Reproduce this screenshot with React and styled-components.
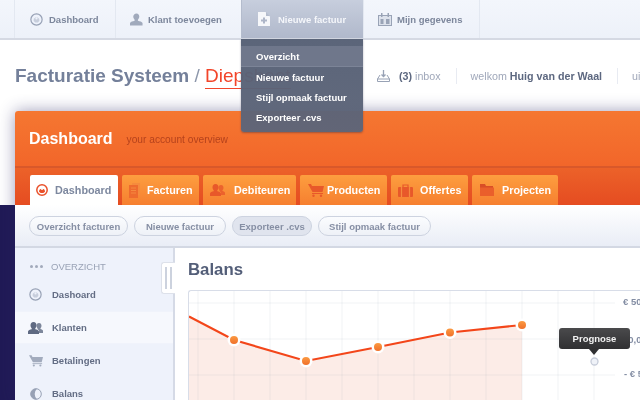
import React from 'react';
import styled, { createGlobalStyle } from 'styled-components';

const Global = createGlobalStyle`
  html, body { margin: 0; padding: 0; }
  body {
    width: 640px;
    height: 400px;
    overflow: hidden;
    font-family: "Liberation Sans", Arial, sans-serif;
    background: #fff;
  }
`;

const Shell = styled.div`
  position: relative;
  width: 640px;
  height: 400px;
  overflow: hidden;
  background: linear-gradient(#fff 205px, #201a56 205px);
  filter: blur(.3px);
`;

/* top navigation */
const TopNav = styled.nav`
  display: flex;
  height: 38px;
  padding-left: 14px;
  background: linear-gradient(#f3f6fc, #edf1f9);
  border-bottom: 2px solid #d5d9e3;
`;

const NavItem = styled.a`
  display: flex;
  align-items: center;
  gap: ${p => p.$gap || 6}px;
  width: ${p => p.$width}px;
  box-sizing: border-box;
  padding-left: ${p => p.$pad || 16}px;
  font-size: 9.5px;
  font-weight: bold;
  color: ${p => (p.$active ? '#f4f6fa' : '#7d879c')};
  border-left: 1px solid ${p => (p.$active ? '#b4bccd' : '#e3e8f1')};
  background: ${p => (p.$active ? 'linear-gradient(#c7cedd, #b0b8cb)' : 'none')};
  &:last-child { border-right: 1px solid #e3e8f1; }
`;

const Dropdown = styled.ul`
  position: absolute;
  top: 39px;
  left: 241px;
  width: 122px;
  height: 93px;
  box-sizing: border-box;
  margin: 0;
  padding: 7px 0 0;
  list-style: none;
  border-radius: 0 0 3px 3px;
  background: linear-gradient(rgba(86, 96, 117, .97), rgba(93, 101, 121, .97));
  box-shadow: 0 1px 2px rgba(40, 40, 70, .4);
  z-index: 5;
`;

const DropItem = styled.li`
  display: flex;
  align-items: center;
  height: ${p => (p.$current ? 19 : 20)}px;
  padding-top: ${p => (p.$current ? 1 : 0)}px;
  padding-left: 15px;
  font-size: 9.5px;
  font-weight: bold;
  color: #fff;
  background: ${p => (p.$current ? '#6f778b' : 'none')};
  border-bottom: ${p => (p.$current ? '1px solid #7c8497' : 'none')};
`;

/* page title and account strip */
const PageHead = styled.header`
  display: flex;
  align-items: center;
  height: 71px;
  padding-left: 15px;
`;

const Title = styled.h1`
  width: 362px;
  flex: none;
  margin: 0;
  font-size: 19px;
  font-weight: bold;
  color: #74809a;
  white-space: nowrap;
`;

const Slash = styled.span`
  font-weight: normal;
  color: #8d97ab;
`;

const Crumb = styled.span`
  font-weight: normal;
  color: #f2452a;
  padding-bottom: 2px;
  border-bottom: 1px solid #f2452a;
`;

const Account = styled.div`
  display: flex;
  align-items: center;
  flex: none;
  font-size: 10.7px;
  color: #a0a8ba;
  white-space: nowrap;
`;

const AccountCell = styled.div`
  display: flex;
  align-items: center;
  gap: 3px;
  height: 16px;
  padding-right: 15px;
  margin-right: 14px;
  border-right: 1px solid #e8ebf2;
`;

const InboxLabel = styled.span`
  margin-left: 6px;
`;

const Strong = styled.b`
  color: #5d6880;
`;

/* orange panel */
const Panel = styled.section`
  width: 700px;
  margin-left: 15px;
  border-radius: 3px 0 0 0;
  box-shadow: 0 0 16px rgba(40, 35, 100, .45);
  background: #fff;
`;

const PanelHead = styled.div`
  display: flex;
  align-items: center;
  gap: 14px;
  height: 55px;
  padding: 0 0 0 14px;
  border-radius: 3px 0 0 0;
  border-bottom: 2px solid #d9582a;
  background: linear-gradient(#f57731, #f2662a);
`;

const PanelTitle = styled.h2`
  margin: 0;
  font-size: 16px;
  font-weight: bold;
  color: #fff;
`;

const PanelSub = styled.span`
  margin-top: 2px;
  font-size: 10.2px;
  color: #b5421c;
`;

const TabBar = styled.div`
  display: flex;
  align-items: flex-end;
  gap: 4px;
  height: 37px;
  padding-left: 15px;
  background: linear-gradient(#ec6229, #e54c21);
`;

const Tab = styled.a`
  display: flex;
  align-items: center;
  gap: ${p => p.$gap || 7}px;
  width: ${p => p.$width}px;
  height: 30px;
  box-sizing: border-box;
  padding-left: ${p => p.$pad || 7}px;
  border-radius: 2px 2px 0 0;
  font-size: 10.8px;
  font-weight: bold;
  color: ${p => (p.$active ? '#7d889f' : '#fff')};
  background: ${p => (p.$active ? '#fff' : 'linear-gradient(#fd9e3f, #f67f30)')};
`;

const ToolBar = styled.div`
  display: flex;
  align-items: flex-start;
  gap: 6px;
  height: 41px;
  padding: 0 0 0 14px;
  border-bottom: 2px solid #d3d8e3;
  background: linear-gradient(#fff, #e9edf6);
`;

const Pill = styled.a`
  display: flex;
  align-items: center;
  justify-content: center;
  width: ${p => p.$width}px;
  height: 20px;
  margin-top: 11px;
  box-sizing: border-box;
  border-radius: 10px;
  border: 1px solid #cdd3e0;
  font-size: 9.5px;
  font-weight: bold;
  color: #868fa4;
  background: ${p => (p.$active ? '#e0e4ee' : 'linear-gradient(#fbfcfe, #eef1f7)')};
`;

const Body = styled.div`
  display: flex;
  height: 152px;
`;

const Sidebar = styled.aside`
  position: relative;
  flex: none;
  width: 160px;
  padding-top: 9px;
  box-sizing: border-box;
  background: #eef2fb;
  border-right: 2px solid #d5dae6;
`;

const SideHeading = styled.div`
  display: flex;
  align-items: center;
  gap: 8px;
  height: 18px;
  margin-bottom: 3px;
  padding-left: 15px;
  font-size: 9.5px;
  color: #9aa3b6;
`;

const Dots = styled.span`
  display: flex;
  gap: 2px;
  i {
    width: 3px;
    height: 3px;
    border-radius: 50%;
    background: #a2aabb;
  }
`;

const SideItem = styled.a`
  display: flex;
  align-items: center;
  height: 33px;
  box-sizing: border-box;
  font-size: 9.5px;
  font-weight: bold;
  color: #636d84;
  background: ${p => (p.$current ? '#f6f8fd' : 'none')};
  border-top: 1px solid ${p => (p.$current ? '#f0f3fb' : 'transparent')};
  border-bottom: 1px solid ${p => (p.$current ? '#f0f3fb' : 'transparent')};
`;

const SideIcon = styled.span`
  display: flex;
  justify-content: center;
  flex: none;
  width: 37px;
  padding-left: 4px;
  box-sizing: border-box;
`;

const Handle = styled.div`
  position: absolute;
  top: 14px;
  right: -2px;
  width: 14px;
  height: 32px;
  display: flex;
  justify-content: center;
  gap: 3px;
  padding: 4px 0;
  box-sizing: border-box;
  border-radius: 3px 0 0 3px;
  background: #fff;
  border: 1px solid #dde1ea;
  border-right: none;
  i {
    width: 2px;
    background: #ccd2de;
  }
`;

const Content = styled.main`
  flex: 1;
  padding: 0 0 0 13px;
  background: #fff;
`;

const ContentTitle = styled.h3`
  margin: 0;
  height: 42px;
  line-height: 44px;
  font-size: 16.8px;
  font-weight: bold;
  color: #535e78;
`;

const ChartFrame = styled.div`
  position: relative;
  height: 110px;
  box-sizing: border-box;
  border-top: 1px solid #d8dde8;
  border-left: 1px solid #d8dde8;
  border-radius: 3px 0 0 0;
  svg { display: block; }
`;

const Tooltip = styled.div`
  position: absolute;
  left: 370px;
  top: 37px;
  width: 71px;
  height: 21px;
  display: flex;
  align-items: center;
  justify-content: center;
  border-radius: 3px;
  font-size: 9.5px;
  font-weight: bold;
  color: #f2f2f2;
  background: linear-gradient(#4a4a4c, #303032);
  &::after {
    content: '';
    position: absolute;
    left: 30px;
    bottom: -6px;
    border-left: 5px solid transparent;
    border-right: 5px solid transparent;
    border-top: 6px solid #303032;
  }
`;

/* icons */
const Gauge = ({ c = '#97a1b5', bg = '#eef2fb', size = 13 }) => (
  <svg width={size} height={size} viewBox="0 0 12 12">
    <circle cx="6" cy="6" r="5.2" fill={bg} stroke={c} strokeWidth="1.1" />
    <path d="M3.400 7.400a2.700 2.700 0 1 1 5.200 0L7.200 8.700H4.800z" fill={c} opacity=".45" />
    <circle cx="6" cy="5" r="1" fill={bg} />
  </svg>
);

const Person = () => (
  <svg width="13" height="13" viewBox="0 0 14 13">
    <path d="M7 0c2 0 3 1.500 3 3.300 0 1.500-.7 2.700-1.500 3.400v1.100c2 .5 4.500 1.200 5 2.400V13H0v-2.800c.5-1.200 3-1.900 5-2.400V6.700C4.200 6 3.500 4.800 3.500 3.300 3.500 1.500 5 0 7 0z" fill="#a1aabc" />
  </svg>
);

const NewDoc = () => (
  <svg width="12" height="14" viewBox="0 0 12 14">
    <path d="M0 0h7.500L12 4.500V14H0z" fill="#f6f7fa" />
    <path d="M8 0l4 4H8z" fill="#b4bccd" />
    <path d="M5 5.500h2v2h2v2H7v2H5v-2H3v-2h2z" fill="#aeb6c8" />
  </svg>
);

const Calendar = () => (
  <svg width="14" height="13" viewBox="0 0 14 13">
    <rect x=".5" y="2.500" width="13" height="10" fill="#dde2ec" stroke="#99a3b6" />
    <path d="M3 0h1.500v4H3zM9.500 0H11v4H9.500zM2.500 6h3v5h-3zM8 6h3.500v5H8z" fill="#99a3b6" />
  </svg>
);

const Inbox = () => (
  <svg width="13" height="12" viewBox="0 0 13 12">
    <path d="M6.500 0v6M4.500 4.500l2 2 2-2" fill="none" stroke="#98a2b5" strokeWidth="1.300" />
    <path d="M3 5L.5 9v2.500h12V9L10 5" fill="none" stroke="#98a2b5" />
    <path d="M.5 9h12" stroke="#98a2b5" />
  </svg>
);

const TabGauge = () => (
  <svg width="12" height="12" viewBox="0 0 12 12">
    <circle cx="6" cy="6" r="5.200" fill="#fff" stroke="#e9502a" strokeWidth="1.500" />
    <path d="M3 7.800a3 3 0 1 1 6 0L7.300 9H4.700z" fill="#e9502a" />
    <circle cx="6" cy="5" r="1" fill="#fff" />
  </svg>
);

const Docs = () => (
  <svg width="11" height="15" viewBox="0 0 11 15">
    <rect x="3" y="0" width="8" height="12" fill="#f58b3d" />
    <rect x="0" y="2" width="9" height="13" fill="#ee6b2e" />
    <path d="M2 5h5M2 7.500h5M2 10h5" stroke="#f58a3f" />
  </svg>
);

const People = ({ c = '#e8582a', w = 16, h = 12 }) => (
  <svg width={w} height={h} viewBox="0 0 16 12">
    <path d="M11 1c1.700 0 2.500 1.200 2.500 2.700 0 1-.5 2-1 2.500v.8c1 .3 2.500.8 2.500 1.800V11h-4V8.500L9.500 7v-.8c-.5-.5-1-1.500-1-2.500C8.500 2.200 9.300 1 11 1z" fill={c} opacity=".8" />
    <path d="M5.500 0C7.500 0 8.500 1.400 8.500 3.200c0 1.200-.6 2.300-1.200 3V7.200c1.500.4 3.700 1 3.700 2.300V12H0V9.500c0-1.300 2.200-1.900 3.700-2.300V6.200c-.6-.7-1.200-1.800-1.200-3C2.500 1.400 3.500 0 5.500 0z" fill={c} />
  </svg>
);

const Cart = ({ c = '#e8582a', w = 16, h = 13 }) => (
  <svg width={w} height={h} viewBox="0 0 16 13">
    <path d="M0 0h3l1 2h12l-1.500 6H4.500z" fill={c} />
    <path d="M4 9.500h11" stroke={c} />
    <circle cx="5.500" cy="11.700" r="1.200" fill={c} />
    <circle cx="13" cy="11.700" r="1.200" fill={c} />
  </svg>
);

const Case = () => (
  <svg width="15" height="13" viewBox="0 0 15 13">
    <path d="M5 3V1h5v2" fill="none" stroke="#e8582a" strokeWidth="1.200" />
    <rect x="0" y="3" width="15" height="10" rx="1" fill="#e8582a" />
    <path d="M3.500 3v10M11.500 3v10" stroke="#f58a3f" strokeWidth="1.200" />
  </svg>
);

const Folder = () => (
  <svg width="14" height="12" viewBox="0 0 14 12">
    <path d="M0 0h5l1 2h7v2H0z" fill="#d94e26" />
    <path d="M0 3.500h14V12H0z" fill="#ea5f2b" />
  </svg>
);

const HalfDisc = () => (
  <svg width="12" height="12" viewBox="0 0 12 12">
    <circle cx="6" cy="6" r="5.300" fill="#eef2fb" stroke="#97a1b5" />
    <path d="M7 .8A5.300 5.300 0 1 0 7 11.200 7 7 0 0 1 7 .8z" fill="#97a1b5" />
  </svg>
);

const points = [[234, 340], [306, 361], [378, 347], [450, 332.5], [522, 325]];
const linePath = 'M189 316.500 L' + points.map(p => p.join(' ')).join(' L');
const verticals = [198, 234, 270, 306, 342, 378, 414, 450, 486, 522, 558, 594];
const horizontals = [303, 339, 375];

const Chart = () => (
  <svg width="451" height="111" viewBox="189 291 451 111">
    <defs>
      <linearGradient id="dot" x1="0" y1="0" x2="0" y2="1">
        <stop offset="0" stopColor="#fb9a42" />
        <stop offset="1" stopColor="#f0702a" />
      </linearGradient>
    </defs>
    <path d={`${linePath} L522 402 L189 402 Z`} fill="#fcece7" />
    {verticals.map(x => (
      <line key={x} x1={x} x2={x} y1="291" y2="402" stroke="#888ea8" strokeOpacity=".11" />
    ))}
    {horizontals.map(y => (
      <line key={y} x1="189" x2="615" y1={y} y2={y} stroke="#888ea8" strokeOpacity=".11" />
    ))}
    <path d={linePath} fill="none" stroke="#f3461a" strokeWidth="2.100" />
    {points.map(([x, y]) => (
      <g key={x}>
        <circle cx={x} cy={y} r="6.500" fill="#fff" />
        <circle cx={x} cy={y} r="4" fill="url(#dot)" />
      </g>
    ))}
    <circle cx="594.500" cy="361.500" r="3.500" fill="#eff2f8" stroke="#c6ccd9" strokeWidth="1.300" />
    <g fontFamily="'Liberation Sans', Arial, sans-serif" fontSize="9.500" fontWeight="bold" fill="#838da3">
      <text x="623" y="305">€ 500</text>
      <text x="623" y="343">€0,00</text>
      <text x="624" y="377">- € 500</text>
    </g>
  </svg>
);

const App = () => (
  <Shell>
    <Global />
    <TopNav>
      <NavItem $width={101} $pad={15}><Gauge />Dashboard</NavItem>
      <NavItem $width={126} $pad={14} $gap={5}><Person />Klant toevoegen</NavItem>
      <NavItem $width={122} $active $gap={8}><NewDoc />Nieuwe factuur</NavItem>
      <NavItem $width={117} $pad={14} $gap={5}><Calendar />Mijn gegevens</NavItem>
    </TopNav>
    <Dropdown>
      <DropItem $current>Overzicht</DropItem>
      <DropItem>Nieuwe factuur</DropItem>
      <DropItem>Stijl opmaak factuur</DropItem>
      <DropItem>Exporteer .cvs</DropItem>
    </Dropdown>
    <PageHead>
      <Title>Facturatie Systeem <Slash>/</Slash> <Crumb>Diepsheet</Crumb></Title>
      <Account>
        <AccountCell>
          <Inbox />
          <InboxLabel><Strong>(3)</Strong> inbox</InboxLabel>
        </AccountCell>
        <AccountCell>
          welkom <Strong>Huig van der Waal</Strong>
        </AccountCell>
        <span>uitloggen</span>
      </Account>
    </PageHead>
    <Panel>
      <PanelHead>
        <PanelTitle>Dashboard</PanelTitle>
        <PanelSub>your account overview</PanelSub>
      </PanelHead>
      <TabBar>
        <Tab $active $width={88} $pad={6}><TabGauge />Dashboard</Tab>
        <Tab $width={77}><Docs />Facturen</Tab>
        <Tab $width={93} $gap={8}><People />Debiteuren</Tab>
        <Tab $width={87} $pad={8} $gap={3}><Cart />Producten</Tab>
        <Tab $width={77}><Case />Offertes</Tab>
        <Tab $width={86} $pad={8} $gap={8}><Folder />Projecten</Tab>
      </TabBar>
      <ToolBar>
        <Pill $width={99}>Overzicht facturen</Pill>
        <Pill $width={92}>Nieuwe factuur</Pill>
        <Pill $width={80} $active>Exporteer .cvs</Pill>
        <Pill $width={113}>Stijl opmaak factuur</Pill>
      </ToolBar>
      <Body>
        <Sidebar>
          <SideHeading><Dots><i /><i /><i /></Dots>OVERZICHT</SideHeading>
          <SideItem><SideIcon><Gauge /></SideIcon>Dashoard</SideItem>
          <SideItem $current><SideIcon><People c="#5f6a82" w={16} h={12} /></SideIcon>Klanten</SideItem>
          <SideItem><SideIcon><Cart c="#a2abbd" w={14} h={12} /></SideIcon>Betalingen</SideItem>
          <SideItem><SideIcon><HalfDisc /></SideIcon>Balans</SideItem>
          <Handle><i /><i /></Handle>
        </Sidebar>
        <Content>
          <ContentTitle>Balans</ContentTitle>
          <ChartFrame>
            <Chart />
            <Tooltip>Prognose</Tooltip>
          </ChartFrame>
        </Content>
      </Body>
    </Panel>
  </Shell>
);

export default App;
